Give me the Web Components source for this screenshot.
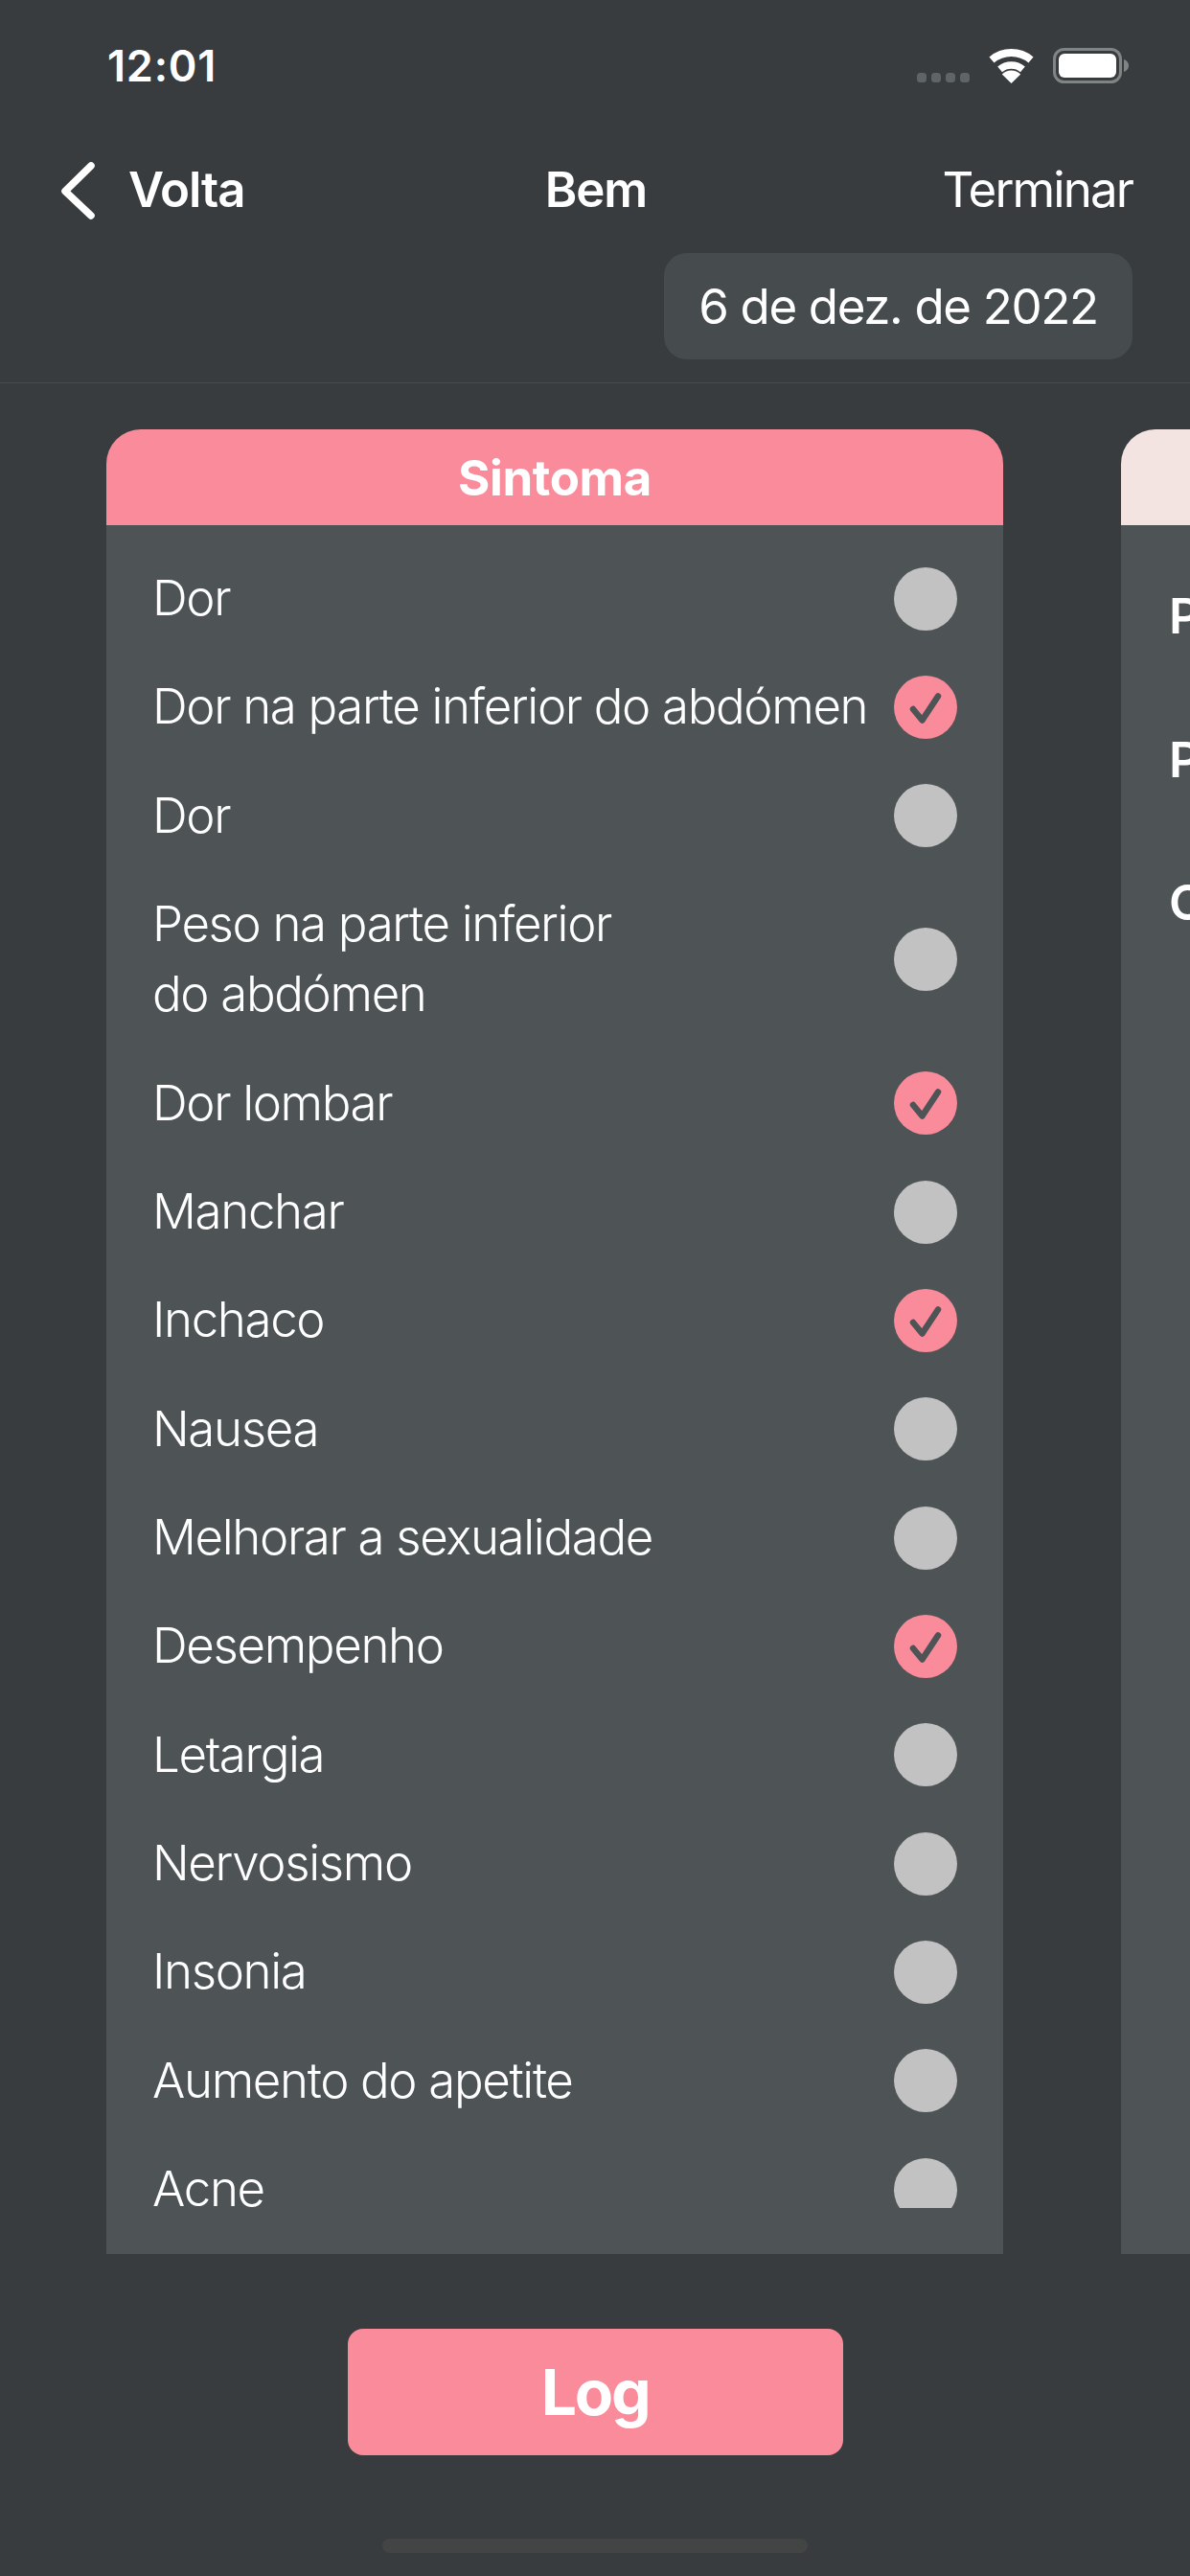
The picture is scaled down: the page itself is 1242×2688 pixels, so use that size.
<!DOCTYPE html>
<html lang="pt">
<head>
<meta charset="utf-8">
<title>Bem</title>
<style>
html,body{margin:0;padding:0;background:#383c3f}
body{width:1242px;height:2688px;overflow:hidden;font-family:Inter,"Liberation Sans",sans-serif;color:#fff}
</style>
</head>
<body>
<app-screen>
  <status-bar time="12:01"></status-bar>
  <nav-bar back="Volta" title="Bem" action="Terminar"></nav-bar>
  <date-row>6 de dez. de 2022</date-row>
  <card-carousel>
    <symptom-card title="Sintoma">
      <symptom-row>Dor</symptom-row>
      <symptom-row checked>Dor na parte inferior do abdómen</symptom-row>
      <symptom-row>Dor</symptom-row>
      <symptom-row>Peso na parte inferior<br>do abdómen</symptom-row>
      <symptom-row checked>Dor lombar</symptom-row>
      <symptom-row>Manchar</symptom-row>
      <symptom-row checked>Inchaco</symptom-row>
      <symptom-row>Nausea</symptom-row>
      <symptom-row>Melhorar a sexualidade</symptom-row>
      <symptom-row checked>Desempenho</symptom-row>
      <symptom-row>Letargia</symptom-row>
      <symptom-row>Nervosismo</symptom-row>
      <symptom-row>Insonia</symptom-row>
      <symptom-row>Aumento do apetite</symptom-row>
      <symptom-row>Acne</symptom-row>
    </symptom-card>
    <symptom-card title="" tone="light">
      <peek-row>P</peek-row>
      <peek-row>P</peek-row>
      <peek-row>O</peek-row>
    </symptom-card>
  </card-carousel>
  <log-button>Log</log-button>
  <home-indicator></home-indicator>
</app-screen>
<script>
function define(name, html, init){
  customElements.define(name, class extends HTMLElement{
    constructor(){
      super();
      this.attachShadow({mode:'open'}).innerHTML = typeof html==='function' ? html(this) : html;
    }
    connectedCallback(){ if(init) init(this); }
  });
}
define('app-screen',`<style>:host{display:flex;flex-direction:column;width:1242px;height:2688px;background:#383c3f;overflow:hidden}</style><slot></slot>`);

define('status-bar',`<style>
:host{display:flex;align-items:center;height:136px;padding:0 64px 0 112px;box-sizing:border-box;flex:none}
.t{font:600 45px/1 Inter,"Liberation Sans",sans-serif;flex:1;letter-spacing:.8px}
.icons{display:flex;align-items:flex-end;height:37px}
.dots{display:flex;gap:5px;margin-right:20px;margin-bottom:1px}
.dots i{width:10px;height:10px;border-radius:3.5px;background:#5f6565;display:block}
svg{display:block}
</style>
<div class="t" id="t"></div>
<div class="icons">
  <div class="dots"><i></i><i></i><i></i><i></i></div>
  <svg width="47" height="37" viewBox="0 0 47 37" style="margin-right:20px"><g fill="none" stroke="#fff" stroke-linecap="butt"><path stroke-width="8" d="M3 12.5A32 32 0 0 1 44 12.5"/><path stroke-width="7.5" d="M11.6 22.4A18.5 18.5 0 0 1 35.4 22.4"/></g><path fill="#fff" d="M23.5 37L13.8 27.5A14 14 0 0 1 33.2 27.5Z"/></svg>
  <svg width="79" height="37" viewBox="0 0 79 37"><rect x="1.5" y="1.5" width="69" height="34" rx="10" fill="none" stroke="#7f8484" stroke-width="3"/><rect x="6" y="6" width="60" height="25" rx="6" fill="#fff"/><path fill="#7f8484" d="M74 12C77 13 79 15.5 79 18.5S77 24 74 25Z"/></svg>
</div>`, el=>{el.shadowRoot.getElementById('t').textContent=el.getAttribute('time')});

define('nav-bar',`<style>
:host{display:grid;grid-template-columns:1fr auto 1fr;align-items:center;height:126px;padding:0 60px 0 62px;box-sizing:border-box;flex:none;font:600 51px/1 Inter,"Liberation Sans",sans-serif;letter-spacing:-1.1px}
.b{display:flex;align-items:center;gap:35px}
.s{margin-bottom:3px}
.a{justify-self:end;font-weight:400;letter-spacing:-1.9px}
svg{display:block}
</style>
<div class="b"><svg width="37" height="60" viewBox="0 0 37 60"><path d="M33 4L6 30.5L33 56" fill="none" stroke="#fff" stroke-width="7.5" stroke-linecap="round" stroke-linejoin="round"/></svg><span class="s" id="b"></span></div>
<div class="s" id="t"></div>
<div class="a s" id="a"></div>`, el=>{const s=el.shadowRoot;s.getElementById('b').textContent=el.getAttribute('back');s.getElementById('t').textContent=el.getAttribute('title');s.getElementById('a').textContent=el.getAttribute('action')});

define('date-row',`<style>
:host{display:flex;justify-content:flex-end;flex:none;height:138px;padding:2px 60px 24px 0;box-sizing:border-box;border-bottom:1px solid #484c4e}
.p{display:flex;align-items:center;justify-content:center;width:489px;height:111px;border-radius:24px;background:#464b4e;font:400 51px/1 Inter,"Liberation Sans",sans-serif;letter-spacing:-1.35px}
</style><div class="p"><slot></slot></div>`);

define('card-carousel',`<style>
:host{display:flex;gap:123px;flex:none;height:1953px;padding:48px 0 0 111px;box-sizing:border-box;overflow:hidden}
</style><slot></slot>`);

define('symptom-card',el=>`<style>
:host{display:flex;flex-direction:column;flex:none;width:936px;height:1904px;overflow:hidden;border-radius:36px 36px 0 0;background:#4e5456}
.h{flex:none;height:100px;background:${el.getAttribute('tone')==='light'?'#f3e4e1':'#f98b9b'};display:flex;align-items:center;justify-content:center;font:700 51px/1 Inter,"Liberation Sans",sans-serif;letter-spacing:-.4px}
.w{flex:1;min-height:0;padding-bottom:48px;display:flex}
.l{flex:1;min-height:0;overflow:hidden;padding-top:20px;box-sizing:border-box}
</style><div class="h">${el.getAttribute('title')||''}</div><div class="w"><div class="l"><slot></slot></div></div>`);

define('symptom-row',el=>`<style>
:host{display:flex;align-items:center;justify-content:space-between;padding:20px 48px 20px 48px;font:300 51px/73.33px Inter,"Liberation Sans",sans-serif;letter-spacing:-1.35px;white-space:nowrap}
.x{margin-top:-1px;margin-bottom:1px}
.c{flex:none;width:66px;height:66px;border-radius:50%;background:${el.hasAttribute('checked')?'#f98b9b':'#c2c2c2'}}
svg{display:block}
</style><div class="x"><slot></slot></div><div class="c">${el.hasAttribute('checked')?'<svg width="66" height="66" viewBox="0 0 66 66"><path d="M20 35L29.5 46.5L46 21.5" fill="none" stroke="#4e5456" stroke-width="6.5" stroke-linecap="round" stroke-linejoin="round"/></svg>':''}</div>`);

define('peek-row',`<style>
:host{display:block;height:149.5px;padding:49px 0 0 50px;box-sizing:border-box;font:600 51px/1 Inter,"Liberation Sans",sans-serif}
</style><slot></slot>`);

define('log-button',`<style>
:host{display:flex;align-items:center;justify-content:center;flex:none;align-self:center;width:517px;height:132px;margin-top:77px;border-radius:16px;background:#f98b9b;font:700 66px/1 Inter,"Liberation Sans",sans-serif;letter-spacing:-2.3px}
</style><slot></slot>`);

define('home-indicator',`<style>
:host{display:block;flex:none;align-self:center;width:444px;height:15px;margin-top:87px;border-radius:8px;background:#434545}
</style>`);
</script>
</body>
</html>
